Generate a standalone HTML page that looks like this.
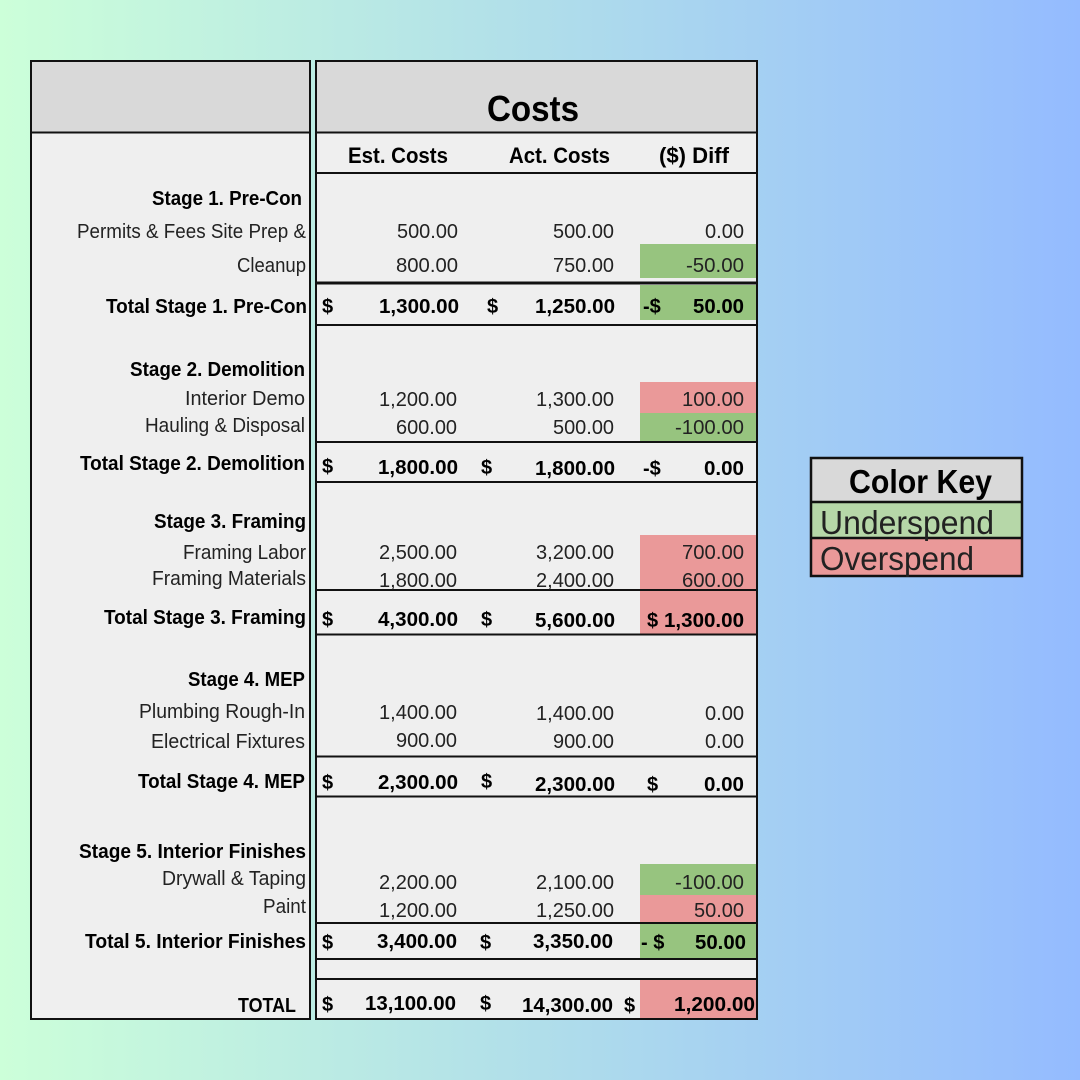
<!DOCTYPE html>
<html><head><meta charset="utf-8"><style>
html,body{margin:0;padding:0;width:1080px;height:1080px;overflow:hidden;background:linear-gradient(90deg,#ccffd9 0%,#b0deea 50%,#94bbff 100%)}
svg{position:absolute;left:0;top:0;display:block}
text{font-family:"Liberation Sans",sans-serif;font-size:20px;fill:#222}
.b{font-weight:700;fill:#000}
</style></head><body>
<svg width="1080" height="1080" viewBox="0 0 1080 1080" xmlns="http://www.w3.org/2000/svg">
<rect x="31" y="61" width="279" height="958" fill="#efefef"/>
<rect x="316" y="61" width="441" height="958" fill="#efefef"/>
<rect x="31" y="61" width="279" height="71" fill="#d9d9d9"/>
<rect x="316" y="61" width="441" height="71" fill="#d9d9d9"/>
<g fill="#97c47f">
<rect x="640" y="244" width="116" height="34"/><rect x="640" y="285" width="116" height="35"/>
<rect x="640" y="413" width="116" height="28"/><rect x="640" y="864" width="116" height="31"/>
<rect x="640" y="924" width="116" height="34"/>
</g>
<g fill="#ea9999">
<rect x="640" y="382" width="116" height="31"/><rect x="640" y="535" width="116" height="99"/>
<rect x="640" y="895" width="116" height="28"/><rect x="640" y="980" width="116" height="39"/>
</g>
<g fill="none" stroke="#111" stroke-width="2">
<rect x="31" y="61" width="279" height="958"/>
<rect x="316" y="61" width="441" height="958"/>
<path d="M31 132.500H310M316 132.500H757M316 173H757M316 325H757M316 442H757M316 482H757M316 590H757M316 634.500H757M316 756.500H757M316 796.500H757M316 923H757M316 959H757M316 979H757"/>
<path d="M316 283H757" stroke-width="3"/>
</g>

<g>
<text class="b" x="487" y="121" style="font-size:36px" textLength="92" lengthAdjust="spacingAndGlyphs">Costs</text>
<text class="b" x="348" y="163" style="font-size:22px" textLength="100" lengthAdjust="spacingAndGlyphs">Est. Costs</text>
<text class="b" x="509" y="163" style="font-size:22px" textLength="101" lengthAdjust="spacingAndGlyphs">Act. Costs</text>
<text class="b" x="659" y="163" style="font-size:22px" textLength="70" lengthAdjust="spacingAndGlyphs">($) Diff</text>
</g>

<!-- labels -->
<g>
<text class="b" x="152" y="205" textLength="150" lengthAdjust="spacingAndGlyphs">Stage 1. Pre-Con</text>
<text x="77" y="238" textLength="229" lengthAdjust="spacingAndGlyphs">Permits &amp; Fees Site Prep &amp;</text>
<text x="237" y="272" textLength="69" lengthAdjust="spacingAndGlyphs">Cleanup</text>
<text class="b" x="106" y="313" textLength="201" lengthAdjust="spacingAndGlyphs">Total Stage 1. Pre-Con</text>
<text class="b" x="130" y="376" textLength="175" lengthAdjust="spacingAndGlyphs">Stage 2. Demolition</text>
<text x="185" y="405" textLength="120" lengthAdjust="spacingAndGlyphs">Interior Demo</text>
<text x="145" y="432" textLength="160" lengthAdjust="spacingAndGlyphs">Hauling &amp; Disposal</text>
<text class="b" x="80" y="470" textLength="225" lengthAdjust="spacingAndGlyphs">Total Stage 2. Demolition</text>
<text class="b" x="154" y="528" textLength="152" lengthAdjust="spacingAndGlyphs">Stage 3. Framing</text>
<text x="183" y="559" textLength="123" lengthAdjust="spacingAndGlyphs">Framing Labor</text>
<text x="152" y="585" textLength="154" lengthAdjust="spacingAndGlyphs">Framing Materials</text>
<text class="b" x="104" y="624" textLength="202" lengthAdjust="spacingAndGlyphs">Total Stage 3. Framing</text>
<text class="b" x="188" y="686" textLength="117" lengthAdjust="spacingAndGlyphs">Stage 4. MEP</text>
<text x="139" y="718" textLength="166" lengthAdjust="spacingAndGlyphs">Plumbing Rough-In</text>
<text x="151" y="748" textLength="154" lengthAdjust="spacingAndGlyphs">Electrical Fixtures</text>
<text class="b" x="138" y="788" textLength="167" lengthAdjust="spacingAndGlyphs">Total Stage 4. MEP</text>
<text class="b" x="79" y="858" textLength="227" lengthAdjust="spacingAndGlyphs">Stage 5. Interior Finishes</text>
<text x="162" y="885" textLength="144" lengthAdjust="spacingAndGlyphs">Drywall &amp; Taping</text>
<text x="263" y="913" textLength="43" lengthAdjust="spacingAndGlyphs">Paint</text>
<text class="b" x="85" y="948" textLength="221" lengthAdjust="spacingAndGlyphs">Total 5. Interior Finishes</text>
<text class="b" x="238" y="1012" textLength="58" lengthAdjust="spacingAndGlyphs">TOTAL</text>
</g>

<!-- regular numbers -->
<g>
<text x="397" y="238" textLength="61" lengthAdjust="spacingAndGlyphs">500.00</text>
<text x="553" y="238" textLength="61" lengthAdjust="spacingAndGlyphs">500.00</text>
<text x="705" y="238" textLength="39" lengthAdjust="spacingAndGlyphs">0.00</text>
<text x="396" y="272" textLength="62" lengthAdjust="spacingAndGlyphs">800.00</text>
<text x="553" y="272" textLength="61" lengthAdjust="spacingAndGlyphs">750.00</text>
<text x="686" y="272" textLength="58" lengthAdjust="spacingAndGlyphs">-50.00</text>

<text x="379" y="406" textLength="78" lengthAdjust="spacingAndGlyphs">1,200.00</text>
<text x="536" y="406" textLength="78" lengthAdjust="spacingAndGlyphs">1,300.00</text>
<text x="682" y="406" textLength="62" lengthAdjust="spacingAndGlyphs">100.00</text>
<text x="396" y="434" textLength="61" lengthAdjust="spacingAndGlyphs">600.00</text>
<text x="553" y="434" textLength="61" lengthAdjust="spacingAndGlyphs">500.00</text>
<text x="675" y="434" textLength="69" lengthAdjust="spacingAndGlyphs">-100.00</text>

<text x="379" y="559" textLength="78" lengthAdjust="spacingAndGlyphs">2,500.00</text>
<text x="536" y="559" textLength="78" lengthAdjust="spacingAndGlyphs">3,200.00</text>
<text x="682" y="559" textLength="62" lengthAdjust="spacingAndGlyphs">700.00</text>
<text x="379" y="587" textLength="78" lengthAdjust="spacingAndGlyphs">1,800.00</text>
<text x="536" y="587" textLength="78" lengthAdjust="spacingAndGlyphs">2,400.00</text>
<text x="682" y="587" textLength="62" lengthAdjust="spacingAndGlyphs">600.00</text>

<text x="379" y="719" textLength="78" lengthAdjust="spacingAndGlyphs">1,400.00</text>
<text x="536" y="720" textLength="78" lengthAdjust="spacingAndGlyphs">1,400.00</text>
<text x="705" y="720" textLength="39" lengthAdjust="spacingAndGlyphs">0.00</text>
<text x="396" y="747" textLength="61" lengthAdjust="spacingAndGlyphs">900.00</text>
<text x="553" y="748" textLength="61" lengthAdjust="spacingAndGlyphs">900.00</text>
<text x="705" y="748" textLength="39" lengthAdjust="spacingAndGlyphs">0.00</text>

<text x="379" y="889" textLength="78" lengthAdjust="spacingAndGlyphs">2,200.00</text>
<text x="536" y="889" textLength="78" lengthAdjust="spacingAndGlyphs">2,100.00</text>
<text x="675" y="889" textLength="69" lengthAdjust="spacingAndGlyphs">-100.00</text>
<text x="379" y="917" textLength="78" lengthAdjust="spacingAndGlyphs">1,200.00</text>
<text x="536" y="917" textLength="78" lengthAdjust="spacingAndGlyphs">1,250.00</text>
<text x="694" y="917" textLength="50" lengthAdjust="spacingAndGlyphs">50.00</text>
</g>

<!-- bold totals -->
<g>
<text class="b" x="322" y="313">$</text><text class="b" x="379" y="313" textLength="80" lengthAdjust="spacingAndGlyphs">1,300.00</text>
<text class="b" x="487" y="313">$</text><text class="b" x="535" y="313" textLength="80" lengthAdjust="spacingAndGlyphs">1,250.00</text>
<text class="b" x="643" y="313">-$</text><text class="b" x="693" y="313" textLength="51" lengthAdjust="spacingAndGlyphs">50.00</text>

<text class="b" x="322" y="473">$</text><text class="b" x="378" y="474" textLength="80" lengthAdjust="spacingAndGlyphs">1,800.00</text>
<text class="b" x="481" y="474">$</text><text class="b" x="535" y="475" textLength="80" lengthAdjust="spacingAndGlyphs">1,800.00</text>
<text class="b" x="643" y="475">-$</text><text class="b" x="704" y="475" textLength="40" lengthAdjust="spacingAndGlyphs">0.00</text>

<text class="b" x="322" y="626">$</text><text class="b" x="378" y="626" textLength="80" lengthAdjust="spacingAndGlyphs">4,300.00</text>
<text class="b" x="481" y="626">$</text><text class="b" x="535" y="627" textLength="80" lengthAdjust="spacingAndGlyphs">5,600.00</text>
<text class="b" x="647" y="627">$</text><text class="b" x="664" y="627" textLength="80" lengthAdjust="spacingAndGlyphs">1,300.00</text>

<text class="b" x="322" y="789">$</text><text class="b" x="378" y="789" textLength="80" lengthAdjust="spacingAndGlyphs">2,300.00</text>
<text class="b" x="481" y="788">$</text><text class="b" x="535" y="791" textLength="80" lengthAdjust="spacingAndGlyphs">2,300.00</text>
<text class="b" x="647" y="791">$</text><text class="b" x="704" y="791" textLength="40" lengthAdjust="spacingAndGlyphs">0.00</text>

<text class="b" x="322" y="949">$</text><text class="b" x="377" y="948" textLength="80" lengthAdjust="spacingAndGlyphs">3,400.00</text>
<text class="b" x="480" y="949">$</text><text class="b" x="533" y="948" textLength="80" lengthAdjust="spacingAndGlyphs">3,350.00</text>
<text class="b" x="641" y="949" xml:space="preserve">- $</text><text class="b" x="695" y="949" textLength="51" lengthAdjust="spacingAndGlyphs">50.00</text>

<text class="b" x="322" y="1011">$</text><text class="b" x="365" y="1010" textLength="91" lengthAdjust="spacingAndGlyphs">13,100.00</text>
<text class="b" x="480" y="1010">$</text><text class="b" x="522" y="1012" textLength="91" lengthAdjust="spacingAndGlyphs">14,300.00</text>
<text class="b" x="624" y="1012">$</text><text class="b" x="674" y="1011" textLength="81" lengthAdjust="spacingAndGlyphs">1,200.00</text>
</g>

<!-- key -->
<rect x="811" y="458" width="211" height="44" fill="#d9d9d9"/>
<rect x="811" y="502" width="211" height="36" fill="#b6d7a8"/>
<rect x="811" y="538" width="211" height="38" fill="#ea9999"/>
<rect x="811" y="458" width="211" height="118" fill="none" stroke="#111" stroke-width="2.500"/>
<path d="M811 502H1022M811 538H1022" stroke="#111" stroke-width="2.500" fill="none"/>
<text class="b" x="849" y="493" style="font-size:33px" textLength="143" lengthAdjust="spacingAndGlyphs">Color Key</text>
<text x="820" y="534" style="font-size:33px" textLength="174" lengthAdjust="spacingAndGlyphs">Underspend</text>
<text x="820" y="570" style="font-size:33px" textLength="154" lengthAdjust="spacingAndGlyphs">Overspend</text>
</svg>
</body></html>
